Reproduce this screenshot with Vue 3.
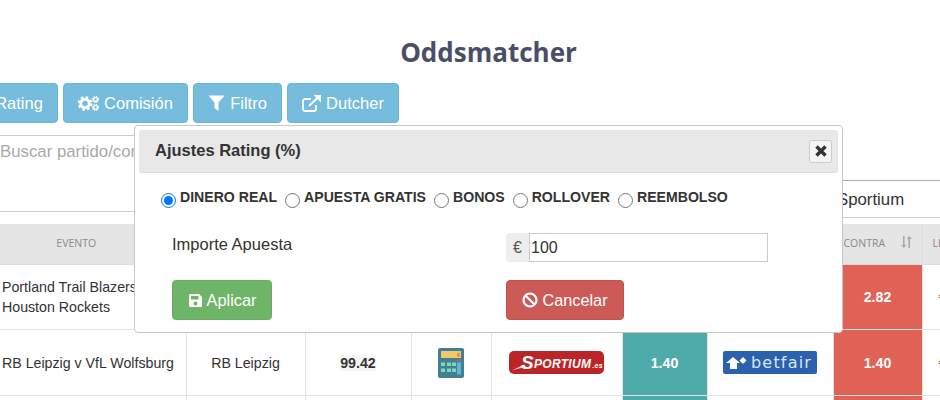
<template>
  <div class="page">
    <h1 class="title">Oddsmatcher</h1>

    <div class="toolbar">
      <button class="tool-btn rating">Rating</button>
      <button class="tool-btn comision">
        <svg class="ico" width="21" height="15" viewBox="0 0 21 15" fill="none" stroke="#fff">
          <circle cx="7" cy="7.500" r="4.300" stroke-width="3" />
          <circle cx="7" cy="7.500" r="6.300" stroke-width="2.200" stroke-dasharray="2.500 2.450" />
          <circle cx="17.500" cy="3.500" r="1.900" stroke-width="1.300" />
          <circle cx="17.500" cy="3.500" r="3" stroke-width="1.200" stroke-dasharray="1.300 1.050" />
          <circle cx="17.500" cy="11.500" r="1.900" stroke-width="1.300" />
          <circle cx="17.500" cy="11.500" r="3" stroke-width="1.200" stroke-dasharray="1.300 1.050" />
        </svg>
        Comisión
      </button>
      <button class="tool-btn filtro">
        <svg class="ico" width="17" height="16" viewBox="0 0 17 16">
          <path fill="#fff" d="M.5.500h16L10.500 7.500V16L6.500 13V7.500z" />
        </svg>
        Filtro
      </button>
      <button class="tool-btn dutcher">
        <svg class="ico" width="19" height="17" viewBox="0 0 19 17">
          <path fill="none" stroke="#fff" stroke-width="1.800" d="M14 10v4a2 2 0 0 1-2 2H3a2 2 0 0 1-2-2V6a2 2 0 0 1 2-2h6" />
          <path fill="none" stroke="#fff" stroke-width="2" d="M7 11L16.500 2" />
          <path fill="#fff" d="M11.500 0H19v7.500z" />
        </svg>
        Dutcher
      </button>
    </div>

    <div class="filters">
      <div class="search">Buscar partido/competición</div>
      <div class="bookie">Sportium</div>
    </div>

    <table class="odds">
      <colgroup>
        <col v-for="w in colWidths" :key="w.id" :style="{ width: w.px + 'px' }" />
      </colgroup>
      <thead>
        <tr>
          <th>EVENTO</th>
          <th>APUESTA</th>
          <th>RATING</th>
          <th></th>
          <th>CASA</th>
          <th>FAVOR</th>
          <th>EXCHANGE</th>
          <th class="th-left">
            CONTRA
            <svg class="sort" width="11" height="12" viewBox="0 0 11 12" fill="#aaa">
              <path d="M2 0h1.600v9H5.500L2.800 12 0 9h2zM7.400 12H9V3h2L8.200 0 5.500 3h1.900z" />
            </svg>
          </th>
          <th class="th-left">LIQUIDEZ</th>
        </tr>
      </thead>
      <tbody>
        <tr v-for="row in rows" :key="row.event">
          <td class="event" v-html="row.event"></td>
          <td>{{ row.bet }}</td>
          <td><strong class="rating-val">{{ row.rating }}</strong></td>
          <td>
            <svg class="calc" width="26" height="30" viewBox="0 0 26 30">
              <rect width="26" height="30" rx="2" fill="#3f8190" />
              <rect x="3" y="3" width="20" height="7" fill="#f4c869" />
              <text x="19" y="9" font-size="6" fill="#d9634f" font-family="Liberation Sans, sans-serif">€</text>
              <rect x="19" y="11.500" width="4" height="2" fill="#c8587a" />
              <rect x="19" y="14.500" width="4" height="12" fill="#5fb4d8" />
              <g fill="#86d3c0">
                <rect x="3" y="14.500" width="4" height="3.500" /><rect x="9" y="14.500" width="4" height="3.500" /><rect x="14" y="14.500" width="4" height="3.500" />
                <rect x="3" y="20.500" width="4" height="3.500" /><rect x="9" y="20.500" width="4" height="3.500" /><rect x="14" y="20.500" width="4" height="3.500" />
              </g>
            </svg>
          </td>
          <td>
            <div class="sportium">
              <svg class="swoosh" width="20" height="19" viewBox="0 0 20 19">
                <path fill="#fff" d="M0 17.500L12 11.500 14 13.500z" opacity=".8" />
              </svg>
              <span class="s-mark">S</span><span>PORTIUM</span><small>.es</small>
            </div>
          </td>
          <td class="favor">{{ row.favor }}</td>
          <td>
            <div class="betfair">
              <svg width="22" height="14" viewBox="0 0 22 14">
                <path fill="#fff" d="M0 7l7-6 7 6h-3v6H4V7z" />
                <path fill="#fff" d="M17 1l3.500 3.500L17 8l-3.500-3.500z" />
              </svg>
              <span>betfair</span>
            </div>
          </td>
          <td class="contra">{{ row.contra }}</td>
          <td class="liq">{{ row.liq }}</td>
        </tr>
      </tbody>
    </table>

    <div class="modal">
      <div class="modal-header">
        <span class="modal-title">Ajustes Rating (%)</span>
        <button class="close" aria-label="Cerrar">
          <svg width="12" height="12" viewBox="0 0 12 12">
            <path stroke="#333" stroke-width="3.400" d="M1.500 1.500l9 9M10.500 1.500l-9 9" />
          </svg>
        </button>
      </div>
      <div class="modal-body">
        <div class="modes">
          <label v-for="m in modes" :key="m" class="mode">
            <input type="radio" name="mode" :value="m" v-model="mode" />
            <span>{{ m }}</span>
          </label>
        </div>
        <div class="form-row">
          <div class="form-col label-col">Importe Apuesta</div>
          <div class="form-col">
            <div class="input-group">
              <span class="addon">€</span>
              <input class="amount" v-model="amount" />
            </div>
          </div>
        </div>
        <div class="form-row actions">
          <div class="form-col">
            <button class="btn btn-green">
              <svg width="15" height="15" viewBox="0 0 15 15">
                <path fill="#fff" fill-rule="evenodd" d="M2 1h9l3 3v8.500a1.500 1.500 0 0 1-1.500 1.500h-10A1.500 1.500 0 0 1 1 12.500v-10A1.500 1.500 0 0 1 2 1zM3 3v3.500h7.500V3zM7.500 8.500a2 2 0 1 0 .01 0z" />
              </svg>
              Aplicar
            </button>
          </div>
          <div class="form-col">
            <button class="btn btn-red">
              <svg width="16" height="16" viewBox="0 0 16 16">
                <circle cx="8" cy="8" r="6.500" fill="none" stroke="#fff" stroke-width="2.200" />
                <path stroke="#fff" stroke-width="2.200" d="M3.500 3.500l9 9" />
              </svg>
              Cancelar
            </button>
          </div>
        </div>
      </div>
    </div>
  </div>
</template>

<script setup>
import { ref } from 'vue'

const mode = ref('DINERO REAL')
const amount = ref('100')

const modes = ['DINERO REAL', 'APUESTA GRATIS', 'BONOS', 'ROLLOVER', 'REEMBOLSO']

const colWidths = [
  { id: 'event', px: 219 },
  { id: 'bet', px: 119 },
  { id: 'rating', px: 106 },
  { id: 'calc', px: 80 },
  { id: 'bookie', px: 131 },
  { id: 'favor', px: 85 },
  { id: 'exchange', px: 126 },
  { id: 'contra', px: 89 },
  { id: 'liq', px: 60 },
]

const rows = [
  { event: 'Portland Trail Blazers v<br>Houston Rockets', bet: 'Houston Rockets', rating: '99.10', favor: '2.80', contra: '2.82', liq: '€ 120' },
  { event: 'RB Leipzig v VfL Wolfsburg', bet: 'RB Leipzig', rating: '99.42', favor: '1.40', contra: '1.40', liq: '€ 350' },
  { event: 'Real Madrid v Getafe', bet: 'Real Madrid', rating: '99.30', favor: '1.30', contra: '1.31', liq: '€ 210' },
]
</script>

<style>
html, body {
  margin: 0;
  background: #fff;
  overflow: hidden;
}
</style>

<style scoped>
.page {
  position: relative;
  width: 940px;
  height: 400px;
  overflow: hidden;
  font-family: "Liberation Sans", Arial, sans-serif;
  color: #333;
}

.title {
  margin: 0;
  padding-top: 35px;
  text-align: center;
  width: 977px;
  font-family: "Open Sans", sans-serif;
  font-size: 26px;
  line-height: 34px;
  font-weight: 700;
  color: #4a4f69;
}

.toolbar {
  display: flex;
  gap: 5px;
  margin: 14px 0 0 -30px;
}

.tool-btn {
  display: flex;
  align-items: center;
  justify-content: center;
  gap: 5px;
  height: 40px;
  padding: 0;
  background: #76bcdc;
  border: 1px solid #6db5d6;
  border-radius: 4px;
  color: #fff;
  font-family: inherit;
  font-size: 16.500px;
}

.rating { width: 88px; padding-left: 10px; }
.comision { width: 125px; }
.filtro { width: 89px; }
.dutcher { width: 112px; }

.filters {
  position: relative;
  height: 89px;
  margin-top: 12px;
}

.search {
  box-sizing: border-box;
  width: 300px;
  height: 77px;
  padding-top: 6px;
  border-top: 1px solid #ccc;
  border-bottom: 1px solid #ccc;
  color: #a9a9a9;
  font-size: 16.800px;
  line-height: 20px;
}

.bookie {
  position: absolute;
  left: 800px;
  top: 45px;
  box-sizing: border-box;
  width: 140px;
  height: 38px;
  padding: 9px 0 0 37px;
  border-top: 1px solid #aaa;
  border-bottom: 1px solid #ccc;
  font-size: 16.800px;
  line-height: 20px;
}

.odds {
  table-layout: fixed;
  width: 1015px;
  margin-left: -33px;
  border-collapse: collapse;
  font-size: 14.200px;
}

.odds th {
  height: 38px;
  padding: 0 0 2px;
  background: #e5e5e5;
  border-right: 1px solid #ddd;
  border-bottom: 1px solid #ddd;
  color: #8a8a8a;
  font-family: "Open Sans", sans-serif;
  font-size: 10.500px;
  font-weight: 400;
  white-space: nowrap;
}

.odds th.th-left {
  text-align: left;
  padding-left: 10px;
}

.sort {
  margin-left: 13px;
  vertical-align: -1px;
}

.odds td {
  height: 65px;
  padding: 0;
  border-right: 1px solid #e2e2e2;
  border-bottom: 1px solid #e2e2e2;
  text-align: center;
  line-height: 20px;
  color: #333;
}

.odds tbody tr:first-child td {
  height: 64px;
}

.odds td.event {
  text-align: left;
  padding-left: 35px;
}

.rating-val {
  background: #f6f6f6;
}

.calc {
  display: block;
  margin: 0 auto;
}

.sportium {
  position: relative;
  box-sizing: border-box;
  width: 95px;
  height: 23px;
  margin: 0 auto;
  padding-left: 12px;
  background: #bb2527;
  border-radius: 5px;
  color: #fff;
  font-size: 12px;
  font-weight: 700;
  font-style: italic;
  line-height: 23px;
  letter-spacing: .3px;
  text-align: left;
  white-space: nowrap;
}

.swoosh {
  position: absolute;
  left: 3px;
  top: 2px;
}

.s-mark {
  font-size: 19px;
  vertical-align: -1px;
}

.sportium small {
  font-size: 7px;
  margin-left: 1px;
}

.betfair {
  display: flex;
  align-items: center;
  gap: 3px;
  box-sizing: border-box;
  width: 94px;
  height: 23px;
  margin: 0 auto;
  padding-left: 3px;
  background: #2a62ae;
  border-radius: 2px;
  color: #d9e6f5;
  font-family: "DejaVu Sans", sans-serif;
  font-size: 16px;
  letter-spacing: 1.200px;
  line-height: 23px;
  white-space: nowrap;
}

.odds td.favor {
  background: #4dabaa;
  color: #fff;
  font-weight: 700;
}

.odds td.contra {
  background: #e06156;
  color: #fff;
  font-weight: 700;
}

.odds td.liq {
  padding-left: 16px;
  text-align: left;
  color: #777;
}

.modal {
  position: absolute;
  left: 134px;
  top: 125px;
  box-sizing: border-box;
  width: 709px;
  height: 208px;
  padding: 4px;
  background: #fff;
  border: 1px solid #c8c8c8;
  border-radius: 4px;
}

.modal-header {
  display: flex;
  align-items: center;
  justify-content: space-between;
  height: 42px;
  padding: 0 6px 0 16px;
  background: #e8e8e8;
  border-radius: 3px;
  border-bottom: 1px solid #ddd;
}

.modal-title {
  padding-bottom: 2px;
  font-size: 16.500px;
  font-weight: 700;
}

.close {
  display: flex;
  align-items: center;
  justify-content: center;
  width: 23px;
  height: 23px;
  padding: 0;
  background: #f5f5f5;
  border: 1px solid #ccc;
  border-radius: 3px;
}

.modal-body {
  padding: 0 0 0 33px;
}

.modes {
  display: flex;
  margin: 16px 0 0 -11px;
  gap: 8px;
}

.mode {
  display: flex;
  align-items: flex-start;
  font-size: 14.100px;
  font-weight: 700;
  line-height: 16px;
}

.mode input {
  width: 15px;
  height: 15px;
  margin: 4px 4px 0 0;
}

.form-row {
  display: flex;
  align-items: flex-start;
  margin-top: 25px;
}

.form-row.actions {
  margin-top: 18px;
}

.form-col {
  width: 334px;
  font-size: 16.500px;
}

.label-col {
  line-height: 22px;
}

.input-group {
  display: flex;
  width: 262px;
  height: 29px;
  margin-left: 1px;
}

.addon {
  box-sizing: border-box;
  width: 23px;
  padding-top: 6px;
  text-align: center;
  background: #eee;
  border-radius: 3px 0 0 3px;
  color: #555;
  font-size: 16px;
}

.amount {
  box-sizing: border-box;
  width: 239px;
  height: 29px;
  padding: 0 1px;
  border: 1px solid #ccc;
  color: #333;
  font-family: inherit;
  font-size: 16px;
  outline: none;
}

.btn {
  display: flex;
  align-items: center;
  justify-content: center;
  gap: 4px;
  height: 40px;
  padding: 0;
  border-radius: 4px;
  color: #fff;
  font-family: inherit;
  font-size: 16.300px;
}

.btn-green {
  width: 100px;
  background: #6fb568;
  border: 1px solid #66ad5f;
}

.btn-red {
  width: 118px;
  margin-left: 1px;
  background: #cc5b57;
  border: 1px solid #c3504c;
}
</style>
